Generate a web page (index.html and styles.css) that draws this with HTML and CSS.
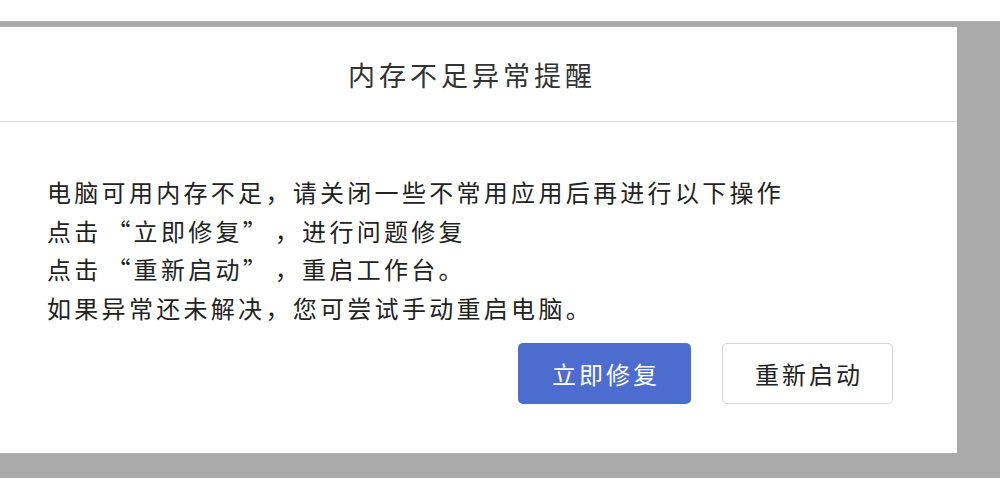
FILE: index.html
```html
<!DOCTYPE html>
<html lang="zh-CN">

<head>
    <meta charset="UTF-8">
    <meta name="viewport" content="width=device-width, initial-scale=1.0">
    <title>内存不足异常提醒</title>
    <link rel="stylesheet" href="styles.css">
</head>

<body>
    <div class="mask">
        <div class="dialog">
            <div class="dialog-header">
                <h1 class="dialog-title">内存不足异常提醒</h1>
            </div>

            <div class="dialog-body">
                <p class="msg">电脑可用内存不足，请关闭一些不常用应用后再进行以下操作</p>
                <p class="msg">点击<span class="q q-open">“</span>立即修复<span class="q q-close">”</span>，进行问题修复</p>
                <p class="msg">点击<span class="q q-open">“</span>重新启动<span class="q q-close">”</span>，重启工作台。</p>
                <p class="msg">如果异常还未解决，您可尝试手动重启电脑。</p>

                <div class="actions">
                    <button class="btn btn-primary">立即修复</button>
                    <button class="btn btn-default">重新启动</button>
                </div>
            </div>
        </div>
    </div>
</body>

</html>
```

FILE: styles.css
```css
body {
    margin: 0;
    background-color: #fff;
    font-family: "Noto Sans CJK SC", "Liberation Sans", sans-serif;
    color: #222;
    overflow: hidden;
}

.mask {
    margin-top: 21px;
    height: 457px;
    padding-top: 6px;
    box-sizing: border-box;
    background-color: #aaaaaa;
}

.dialog {
    margin-left: -17px;
    width: 974px;
    height: 426px;
    background-color: #fff;
}

.dialog-header {
    height: 94px;
    border-bottom: 1px solid #dcdcdc;
    display: flex;
    align-items: center;
    justify-content: center;
}

.dialog-title {
    margin: 0;
    font-size: 27px;
    font-weight: normal;
    letter-spacing: 4px;
    padding-left: 4px;
    color: #333;
}

.dialog-body {
    padding: 51px 64px 0 64px;
}

.msg {
    margin: 0;
    font-size: 24px;
    line-height: 38.5px;
    letter-spacing: 3.3px;
}

.q {
    display: inline-block;
    width: 29px;
    letter-spacing: 0;
}

.q-open {
    text-align: right;
    margin-right: 3px;
}

.q-close {
    text-align: left;
    margin-right: 3px;
}

.actions {
    display: flex;
    justify-content: flex-end;
    gap: 31px;
    margin-top: 16px;
}

.btn {
    height: 61px;
    font-family: "Noto Sans CJK SC", sans-serif;
    font-size: 24px;
    letter-spacing: 3px;
    padding: 0 0 0 3px;
    border-radius: 5px;
    cursor: pointer;
}

.btn-primary {
    width: 173px;
    background-color: #4d6ccf;
    color: #fff;
    border: none;
}

.btn-default {
    width: 171px;
    background-color: #fff;
    color: #222;
    border: 1px solid #d4d4d4;
}
```
